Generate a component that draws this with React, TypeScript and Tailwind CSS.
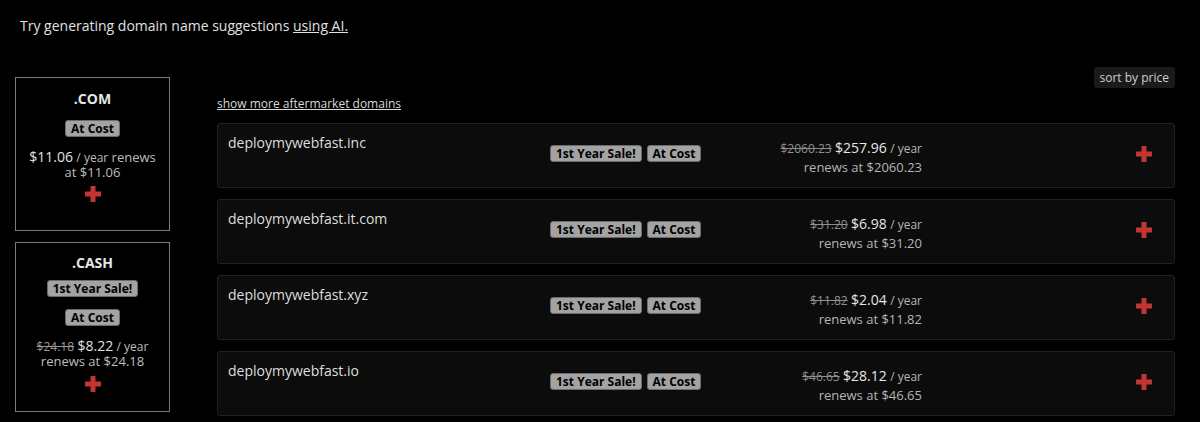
import React from "react";

type Row = {
  name: string;
  was: string;
  price: string;
  renews: string;
};

const rows: Row[] = [
  { name: "deploymywebfast.inc", was: "$2060.23", price: "$257.96", renews: "$2060.23" },
  { name: "deploymywebfast.it.com", was: "$31.20", price: "$6.98", renews: "$31.20" },
  { name: "deploymywebfast.xyz", was: "$11.82", price: "$2.04", renews: "$11.82" },
  { name: "deploymywebfast.io", was: "$46.65", price: "$28.12", renews: "$46.65" },
];

function Badge({ children }: { children: React.ReactNode }) {
  return (
    <span className="block rounded-[3px] border border-[#6b6b6b] bg-[#a3a3a3] px-[5px] text-[12px] leading-[15px] font-bold text-black">
      {children}
    </span>
  );
}

function Plus() {
  return (
    <svg width="16" height="16" viewBox="0 0 16 16" className="block">
      <path d="M5.5 0h5v5.5H16v5h-5.5V16h-5v-5.5H0v-5h5.5z" fill="#c23535" />
    </svg>
  );
}

function TldCard({
  tld,
  sale,
  was,
  price,
  renews,
}: {
  tld: string;
  sale?: boolean;
  was?: string;
  price: string;
  renews: string;
}) {
  return (
    <div
      className={`flex flex-col items-center border border-[#7a7a7a] bg-black px-2 text-center ${
        sale ? "h-[170px] pt-[10px]" : "h-[154px] pt-[11px]"
      }`}
    >
      <div className="text-[14px] leading-[20px] font-bold text-[#e6e6e6]">{tld}</div>
      {sale && (
        <div className="mt-[7px]">
          <Badge>1st Year Sale!</Badge>
        </div>
      )}
      <div className={sale ? "mt-[12px]" : "mt-[11px]"}>
        <Badge>At Cost</Badge>
      </div>
      <div className="mt-[12px] text-[13px] leading-[15px] text-[#bdbdbd]">
        {was && (
          <>
            <span className="text-[12px] text-[#999] line-through">{was}</span>{" "}
          </>
        )}
        <span className="text-[14px] text-[#e0e0e0]">{price}</span>{" "}
        <span className="text-[12px]">/ year</span> renews at {renews}
      </div>
      <div className={sale ? "mt-[7px]" : "mt-[6px]"}>
        <Plus />
      </div>
    </div>
  );
}

function DomainRow({ row }: { row: Row }) {
  return (
    <div className="flex h-[65px] items-center rounded-[3px] border border-[#202020] bg-[#0c0c0c] pr-[22px] pl-[10px]">
      <div className="w-[322px] self-start pt-[9px] text-[14px] leading-[20px] text-[#dedede]">{row.name}</div>
      <div className="flex w-[152px] gap-[5px] pb-[5px]">
        <Badge>1st Year Sale!</Badge>
        <Badge>At Cost</Badge>
      </div>
      <div className="w-[220px] pt-[4px] text-right text-[13px] leading-[19px] text-[#b5b5b5]">
        <div>
          <span className="text-[12px] text-[#8f8f8f] line-through">{row.was}</span>{" "}
          <span className="text-[14px] text-[#e6e6e6]">{row.price}</span>{" "}
          <span className="text-[12px]">/ year</span>
        </div>
        <div>renews at {row.renews}</div>
      </div>
      <div className="flex flex-1 justify-end pb-[3px]">
        <Plus />
      </div>
    </div>
  );
}

export default function App() {
  return (
    <div className="h-[422px] w-full overflow-hidden bg-black font-['Open_Sans',sans-serif]">
      <p className="pt-[15px] pl-[20px] text-[14px] leading-[22px] text-[#e0e0e0]">
        Try generating domain name suggestions <span className="underline">using AI.</span>
      </p>
      <div className="mt-[30px] flex gap-[47px] pl-[15px]">
        <div className="mt-[10px] flex w-[155px] flex-col gap-[11px]">
          <TldCard tld=".COM" price="$11.06" renews="$11.06" />
          <TldCard tld=".CASH" sale was="$24.18" price="$8.22" renews="$24.18" />
        </div>
        <div className="w-[958px]">
          <div className="flex justify-end">
            <button className="rounded-[3px] bg-[#1a1a1a] px-[6px] text-[12px] leading-[21px] text-[#cfcfcf]">
              sort by price
            </button>
          </div>
          <div className="mt-[7px] text-[12px] leading-[18px] text-[#d8d8d8] underline">show more aftermarket domains</div>
          <div className="mt-[10px] flex flex-col gap-[11px]">
            {rows.map((r) => (
              <DomainRow key={r.name} row={r} />
            ))}
          </div>
        </div>
      </div>
    </div>
  );
}
